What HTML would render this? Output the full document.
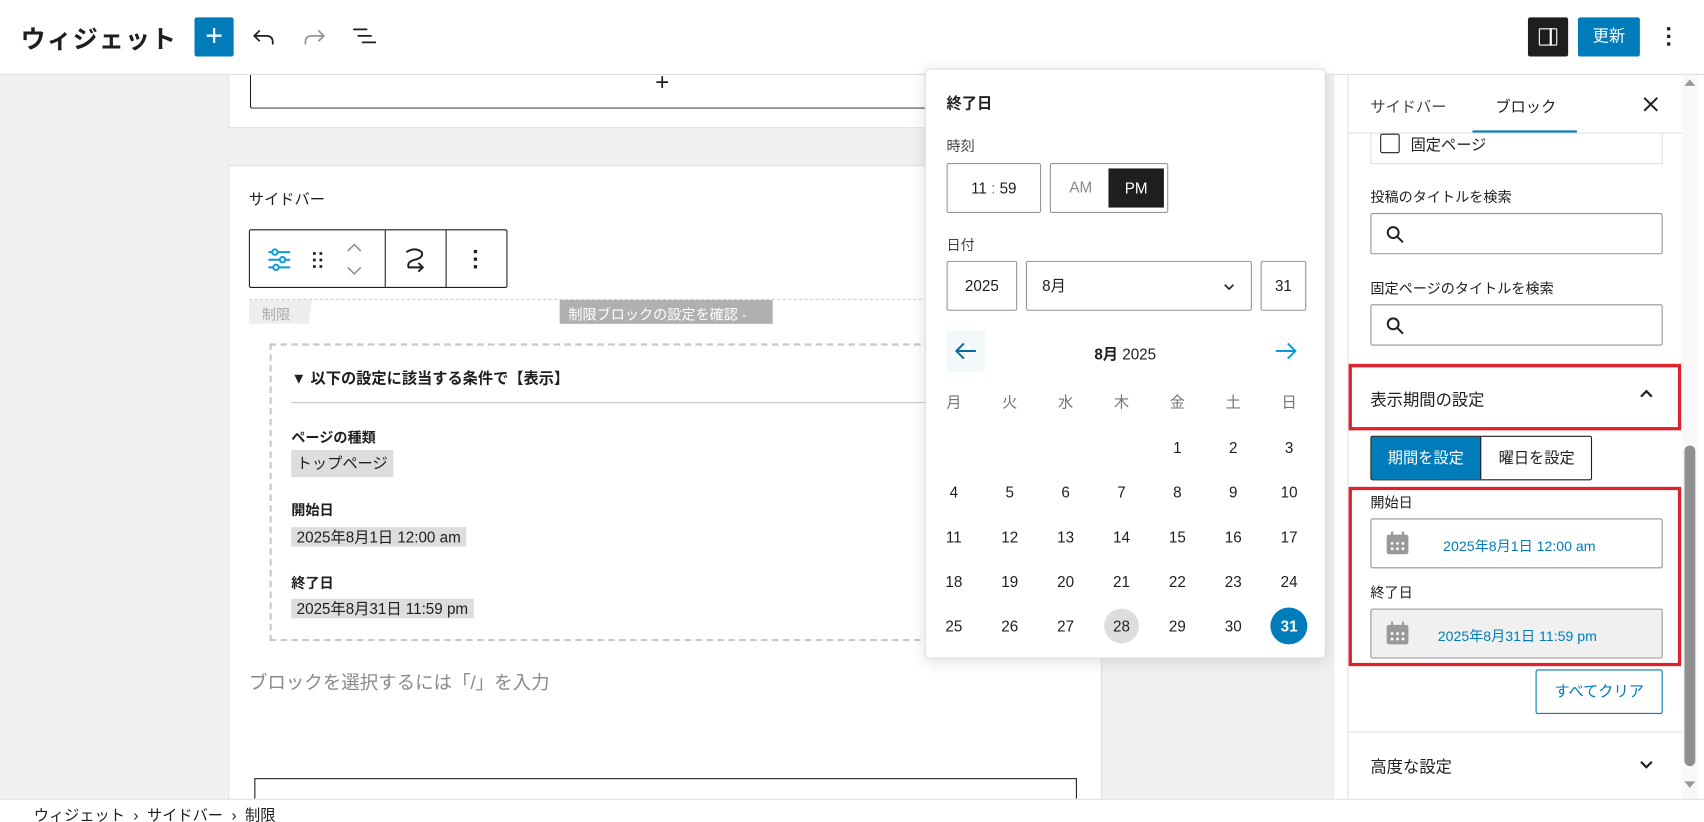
<!DOCTYPE html>
<html><head><meta charset="utf-8">
<style>
*{box-sizing:border-box;margin:0;padding:0}
html,body{width:1704px;height:822px;overflow:hidden;background:#fff}
body{position:relative;font-family:"Liberation Sans","Noto Sans CJK JP",sans-serif;color:#1e1e1e;font-size:13px}
#stage{position:absolute;left:0;top:0;width:1568px;height:757px;transform:scale(1.08673);transform-origin:0 0;overflow:hidden;background:#fff}
.a{position:absolute}
.hdr{left:0;top:0;width:1568px;height:69px;background:#fff;border-bottom:1px solid #e0e0e0}
.canvas{left:0;top:69px;width:1228px;height:666px;background:#f0f0f0;overflow:hidden}
.w{background:#fff}
.tag{background:#ddd;padding:1px 5px;font-size:14px;display:inline-block}
.btn{border:1px solid #949494;border-radius:2px;background:#fff}
.cal td{width:51px;height:41px;text-align:center;font-size:14px;color:#1e1e1e}
.cal th{font-weight:normal;color:#757575;font-size:14px;height:42px}
.lab{font-size:13px;color:#1e1e1e}
</style></head><body><div id="stage">
<div class="a hdr">
  <div class="a" style="left:19px;top:17px;font-size:23px;font-weight:bold;letter-spacing:1px">ウィジェット</div>
  <div class="a" style="left:179px;top:16px;width:36px;height:36px;background:#007cba;border-radius:2px;color:#fff;font-size:28px;line-height:34px;text-align:center">+</div>
  <svg class="a" style="left:230px;top:22px" width="26" height="24" viewBox="0 0 26 24"><path d="M9 6 L4 11 L9 16 M4 11 H15 Q21 11 21 17 V19" fill="none" stroke="#1e1e1e" stroke-width="1.6"/></svg>
  <svg class="a" style="left:276px;top:22px" width="26" height="24" viewBox="0 0 26 24"><path d="M17 6 L22 11 L17 16 M22 11 H11 Q5 11 5 17 V19" fill="none" stroke="#949494" stroke-width="1.6"/></svg>
  <svg class="a" style="left:322px;top:24px" width="26" height="20" viewBox="0 0 26 20"><path d="M3 3H16 M7 9H20 M11 15H24" stroke="#1e1e1e" stroke-width="1.6"/></svg>
  <div class="a" style="left:1406px;top:16px;width:37px;height:36px;background:#1e1e1e;border-radius:2px"><div class="a" style="left:10px;top:10px;width:17px;height:16px;border:1.6px solid #fff;border-radius:1px"></div><div class="a" style="left:20px;top:10px;width:1.6px;height:16px;background:#fff"></div></div>
  <div class="a" style="left:1452px;top:16px;width:57px;height:36px;background:#007cba;border-radius:2px;color:#fff;font-size:15px;line-height:36px;text-align:center">更新</div>
  <div class="a" style="left:1534px;top:25px;width:4px;font-size:0"><div style="width:3px;height:3px;background:#1e1e1e;margin-bottom:4px"></div><div style="width:3px;height:3px;background:#1e1e1e;margin-bottom:4px"></div><div style="width:3px;height:3px;background:#1e1e1e"></div></div>
</div>

<div class="a canvas">
  <div class="a w" style="left:210px;top:0;width:804px;height:49px;border:1px solid #e0e0e0;border-top:0"></div>
  <div class="a" style="left:230px;top:-4px;width:780px;height:35px;border:1px solid #1e1e1e;border-top:0;border-radius:0 0 2px 2px"><div class="a" style="left:372px;top:-2px;font-size:22px">+</div></div>
  <div class="a w" style="left:210px;top:83px;width:804px;height:600px;border:1px solid #e0e0e0"></div>
  <div class="a" style="left:229px;top:104px;font-size:14px">サイドバー</div>
  <div class="a" style="left:229px;top:142px;width:238px;height:54px;border:1px solid #1e1e1e;border-radius:2px;background:#fff">
    <svg class="a" style="left:14px;top:14px" width="26" height="26" viewBox="0 0 26 26" fill="none" stroke="#0a9ad9" stroke-width="1.8"><path d="M3 6H23 M3 13H23 M3 20H23"/><circle cx="9" cy="6" r="2.5" fill="#fff"/><circle cx="16" cy="13" r="2.5" fill="#fff"/><circle cx="10" cy="20" r="2.5" fill="#fff"/></svg>
    <svg class="a" style="left:56px;top:18px" width="14" height="18"><g fill="#1e1e1e"><rect x="2" y="2" width="2.5" height="2.5"/><rect x="8" y="2" width="2.5" height="2.5"/><rect x="2" y="8" width="2.5" height="2.5"/><rect x="8" y="8" width="2.5" height="2.5"/><rect x="2" y="14" width="2.5" height="2.5"/><rect x="8" y="14" width="2.5" height="2.5"/></g></svg>
    <svg class="a" style="left:88px;top:10px" width="16" height="34" fill="none" stroke="#949494" stroke-width="1.5"><path d="M2 9L8 3L14 9 M2 24L8 30L14 24"/></svg>
    <div class="a" style="left:124px;top:0;width:1px;height:52px;background:#1e1e1e"></div>
    <svg class="a" style="left:140px;top:14px" width="24" height="26" fill="none" stroke="#1e1e1e" stroke-width="1.8"><path d="M4 6Q12 1 18 6Q20 11 12 13Q4 15 6 20H18 M15 16L19 20L15 24"/></svg>
    <div class="a" style="left:180px;top:0;width:1px;height:52px;background:#1e1e1e"></div>
    <div class="a" style="left:206px;top:18px;font-size:0"><div style="width:3px;height:3px;background:#1e1e1e;margin-bottom:4px"></div><div style="width:3px;height:3px;background:#1e1e1e;margin-bottom:4px"></div><div style="width:3px;height:3px;background:#1e1e1e"></div></div>
  </div>
  <div class="a" style="left:229px;top:206px;width:785px;border-top:1px dashed #ccc"></div>
  <div class="a" style="left:229px;top:207px;width:58px;height:22px;background:#eee;clip-path:polygon(0 0,100% 0,95% 100%,0 100%);color:#aaa;font-size:13px;padding:3px 12px">制限</div>
  <div class="a" style="left:515px;top:207px;width:196px;height:22px;background:#b0b0b0;color:#fff;font-size:13px;padding:3px 8px">制限ブロックの設定を確認 -</div>
  <div class="a" style="left:248px;top:247px;width:780px;height:274px;border:2px dashed #c8c8c8;border-right:0"></div>
  <div class="a" style="left:268px;top:269px;font-size:14px;font-weight:bold">▼ 以下の設定に該当する条件で【表示】</div>
  <div class="a" style="left:268px;top:301px;width:600px;height:1px;background:#c8c8c8"></div>
  <div class="a" style="left:268px;top:323px;font-size:13px;font-weight:bold">ページの種類</div>
  <div class="a tag" style="left:268px;top:345px;height:25px;line-height:23px">トップページ</div>
  <div class="a" style="left:268px;top:390px;font-size:13px;font-weight:bold">開始日</div>
  <div class="a tag" style="left:268px;top:416px;height:18px;line-height:17px">2025年8月1日 12:00 am</div>
  <div class="a" style="left:268px;top:457px;font-size:13px;font-weight:bold">終了日</div>
  <div class="a tag" style="left:268px;top:482px;height:18px;line-height:17px">2025年8月31日 11:59 pm</div>
  <div class="a" style="left:229px;top:545px;font-size:17px;color:#8a8a8a">ブロックを選択するには「/」を入力</div>
  <div class="a" style="left:234px;top:647px;width:757px;height:40px;border:1px solid #1e1e1e;background:#fff"></div>
  <div class="a" style="left:1228px;top:0;width:12px;height:666px;background:#f8f8f8"></div>
  <div class="a" style="left:1229px;top:60px;width:10px;height:160px;background:#8f8f8f;border-radius:5px"></div>
  <svg class="a" style="left:1228px;top:2px" width="12" height="10"><path d="M1 8L6 2L11 8Z" fill="#999"/></svg>
  <svg class="a" style="left:1228px;top:648px" width="12" height="10"><path d="M1 2L6 8L11 2Z" fill="#999"/></svg>
</div>

<div class="a" style="left:851px;top:63px;width:369px;height:543px;background:#fff;border:1px solid #ddd;border-radius:4px;box-shadow:0 3px 14px rgba(0,0,0,.12)">
  <div class="a" style="left:19px;top:21px;font-size:14px;font-weight:bold">終了日</div>
  <div class="a lab" style="left:19px;top:60px;color:#444">時刻</div>
  <div class="a btn" style="left:19px;top:86px;width:87px;height:46px;font-size:14px;line-height:44px;text-align:center">11 <span style="color:#888">:</span> 59</div>
  <div class="a btn" style="left:114px;top:86px;width:109px;height:46px"><span class="a" style="left:17px;top:13px;color:#888;font-size:14px">AM</span><div class="a" style="left:53px;top:4px;width:51px;height:36px;background:#1e1e1e;color:#fff;text-align:center;line-height:36px;font-size:14px">PM</div></div>
  <div class="a lab" style="left:19px;top:151px;color:#444">日付</div>
  <div class="a btn" style="left:19px;top:176px;width:65px;height:46px;font-size:14px;line-height:44px;text-align:center">2025</div>
  <div class="a btn" style="left:92px;top:176px;width:208px;height:46px;font-size:14px;line-height:44px;padding-left:14px">8月<svg class="a" style="left:180px;top:19px" width="12" height="8" fill="none" stroke="#1e1e1e" stroke-width="1.5"><path d="M2 2L6 6L10 2"/></svg></div>
  <div class="a btn" style="left:308px;top:176px;width:42px;height:46px;font-size:14px;line-height:44px;text-align:center">31</div>
  <div class="a" style="left:19px;top:240px;width:36px;height:38px;background:#f3f8fb;border-radius:2px"><svg class="a" style="left:7px;top:9px" width="22" height="20" fill="none" stroke="#0a6a9f" stroke-width="1.8"><path d="M20 10H3 M9 3L2 10L9 17"/></svg></div>
  <div class="a" style="left:155px;top:252px;font-size:14px"><b>8月</b> 2025</div>
  <svg class="a" style="left:320px;top:249px" width="22" height="20" fill="none" stroke="#0a9ad9" stroke-width="1.8"><path d="M2 10H19 M13 3L20 10L13 17"/></svg>
  <table class="a cal" style="left:0px;top:285px;border-collapse:collapse;width:360px">
    <tr><th>月</th><th>火</th><th>水</th><th>木</th><th>金</th><th>土</th><th>日</th></tr>
    <tr><td></td><td></td><td></td><td></td><td>1</td><td>2</td><td>3</td></tr>
    <tr><td>4</td><td>5</td><td>6</td><td>7</td><td>8</td><td>9</td><td>10</td></tr>
    <tr><td>11</td><td>12</td><td>13</td><td>14</td><td>15</td><td>16</td><td>17</td></tr>
    <tr><td>18</td><td>19</td><td>20</td><td>21</td><td>22</td><td>23</td><td>24</td></tr>
    <tr><td>25</td><td>26</td><td>27</td><td><span style="display:inline-block;width:32px;height:32px;border-radius:50%;background:#ddd;line-height:32px">28</span></td><td>29</td><td>30</td><td><span style="display:inline-block;width:34px;height:34px;border-radius:50%;background:#007cba;color:#fff;font-weight:bold;line-height:34px">31</span></td></tr>
  </table>
</div>

<div class="a" style="left:1240px;top:69px;width:308px;height:666px;background:#fff;border-left:1px solid #e0e0e0">
  <div class="a" style="left:20px;top:19px;font-size:14px;color:#444">サイドバー</div>
  <div class="a" style="left:135px;top:19px;font-size:14px">ブロック</div>
  <div class="a" style="left:114px;top:51px;width:96px;height:2px;background:#007cba"></div>
  <svg class="a" style="left:270px;top:19px" width="16" height="16" stroke="#1e1e1e" stroke-width="1.8"><path d="M2 2L14 14M14 2L2 14"/></svg>
  <div class="a" style="left:0;top:53px;width:308px;height:1px;background:#e0e0e0"></div>
  <div class="a" style="left:20px;top:54px;width:269px;height:28px;border:1px solid #ddd;border-top:0"><div class="a" style="left:8px;top:0;width:18px;height:18px;border:1.5px solid #1e1e1e;border-radius:2px"></div><span class="a" style="left:36px;top:0;font-size:14px">固定ページ</span></div>
  <div class="a lab" style="left:20px;top:102px">投稿のタイトルを検索</div>
  <div class="a btn" style="left:20px;top:127px;width:269px;height:38px"><svg class="a" style="left:13px;top:10px" width="18" height="18" fill="none" stroke="#1e1e1e" stroke-width="1.8"><circle cx="7" cy="7" r="5"/><path d="M11 11L16 16"/></svg></div>
  <div class="a lab" style="left:20px;top:186px">固定ページのタイトルを検索</div>
  <div class="a btn" style="left:20px;top:211px;width:269px;height:38px"><svg class="a" style="left:13px;top:10px" width="18" height="18" fill="none" stroke="#1e1e1e" stroke-width="1.8"><circle cx="7" cy="7" r="5"/><path d="M11 11L16 16"/></svg></div>
  <div class="a" style="left:0;top:265px;width:308px;height:1px;background:#e0e0e0"></div>
  <div class="a" style="left:0;top:266px;width:306px;height:61px;border:3px solid #e0202a"></div>
  <div class="a" style="left:20px;top:288px;font-size:15px">表示期間の設定</div>
  <svg class="a" style="left:267px;top:288px" width="14" height="10" fill="none" stroke="#1e1e1e" stroke-width="2"><path d="M2 8L7 3L12 8"/></svg>
  <div class="a" style="left:20px;top:332px;width:204px;height:41px;border:1px solid #1e1e1e;border-radius:2px;overflow:hidden"><div class="a" style="left:0;top:0;width:101px;height:39px;background:#007cba;color:#fff;font-size:14px;line-height:39px;text-align:center;border-right:1px solid #1e1e1e">期間を設定</div><div class="a" style="left:101px;top:0;width:102px;height:39px;font-size:14px;line-height:39px;text-align:center">曜日を設定</div></div>
  <div class="a" style="left:0;top:379px;width:306px;height:165px;border:3px solid #e0202a"></div>
  <div class="a lab" style="left:20px;top:383px">開始日</div>
  <div class="a btn" style="left:20px;top:408px;width:269px;height:46px"><svg class="a" style="left:13px;top:11px" width="22" height="22"><rect x="1" y="3" width="20" height="18" rx="2" fill="#999"/><rect x="5" y="0" width="2" height="5" fill="#999"/><rect x="15" y="0" width="2" height="5" fill="#999"/><g fill="#fff"><circle cx="6" cy="11" r="1.3"/><circle cx="11" cy="11" r="1.3"/><circle cx="16" cy="11" r="1.3"/><circle cx="6" cy="16" r="1.3"/><circle cx="11" cy="16" r="1.3"/><circle cx="16" cy="16" r="1.3"/></g></svg><span class="a" style="left:66px;top:14px;color:#007cba;font-size:13px">2025年8月1日 12:00 am</span></div>
  <div class="a lab" style="left:20px;top:466px">終了日</div>
  <div class="a btn" style="left:20px;top:491px;width:269px;height:46px;background:#f0f0f0"><svg class="a" style="left:13px;top:11px" width="22" height="22"><rect x="1" y="3" width="20" height="18" rx="2" fill="#999"/><rect x="5" y="0" width="2" height="5" fill="#999"/><rect x="15" y="0" width="2" height="5" fill="#999"/><g fill="#fff"><circle cx="6" cy="11" r="1.3"/><circle cx="11" cy="11" r="1.3"/><circle cx="16" cy="11" r="1.3"/><circle cx="6" cy="16" r="1.3"/><circle cx="11" cy="16" r="1.3"/><circle cx="16" cy="16" r="1.3"/></g></svg><span class="a" style="left:61px;top:14px;color:#007cba;font-size:13px">2025年8月31日 11:59 pm</span></div>
  <div class="a" style="left:172px;top:547px;width:117px;height:41px;border:1px solid #007cba;border-radius:2px;color:#007cba;font-size:14px;line-height:39px;text-align:center">すべてクリア</div>
  <div class="a" style="left:0;top:604px;width:308px;height:1px;background:#e0e0e0"></div>
  <div class="a" style="left:20px;top:626px;font-size:15px">高度な設定</div>
  <svg class="a" style="left:267px;top:629px" width="14" height="10" fill="none" stroke="#1e1e1e" stroke-width="2"><path d="M2 3L7 8L12 3"/></svg>
</div>
<div class="a" style="left:1548px;top:69px;width:14px;height:666px;background:#f8f8f8"></div>
<div class="a" style="left:1550px;top:410px;width:10px;height:295px;background:#8f8f8f;border-radius:5px"></div>
<svg class="a" style="left:1549px;top:71px" width="12" height="10"><path d="M1 8L6 2L11 8Z" fill="#999"/></svg>
<svg class="a" style="left:1549px;top:717px" width="12" height="10"><path d="M1 2L6 8L11 2Z" fill="#999"/></svg>

<div class="a" style="left:0;top:735px;width:1568px;height:30px;background:#fff;border-top:1px solid #e0e0e0">
  <div class="a" style="left:31px;top:4px;font-size:14px">ウィジェット &nbsp;›&nbsp; サイドバー &nbsp;›&nbsp; 制限</div>
</div>
</div></body></html>
